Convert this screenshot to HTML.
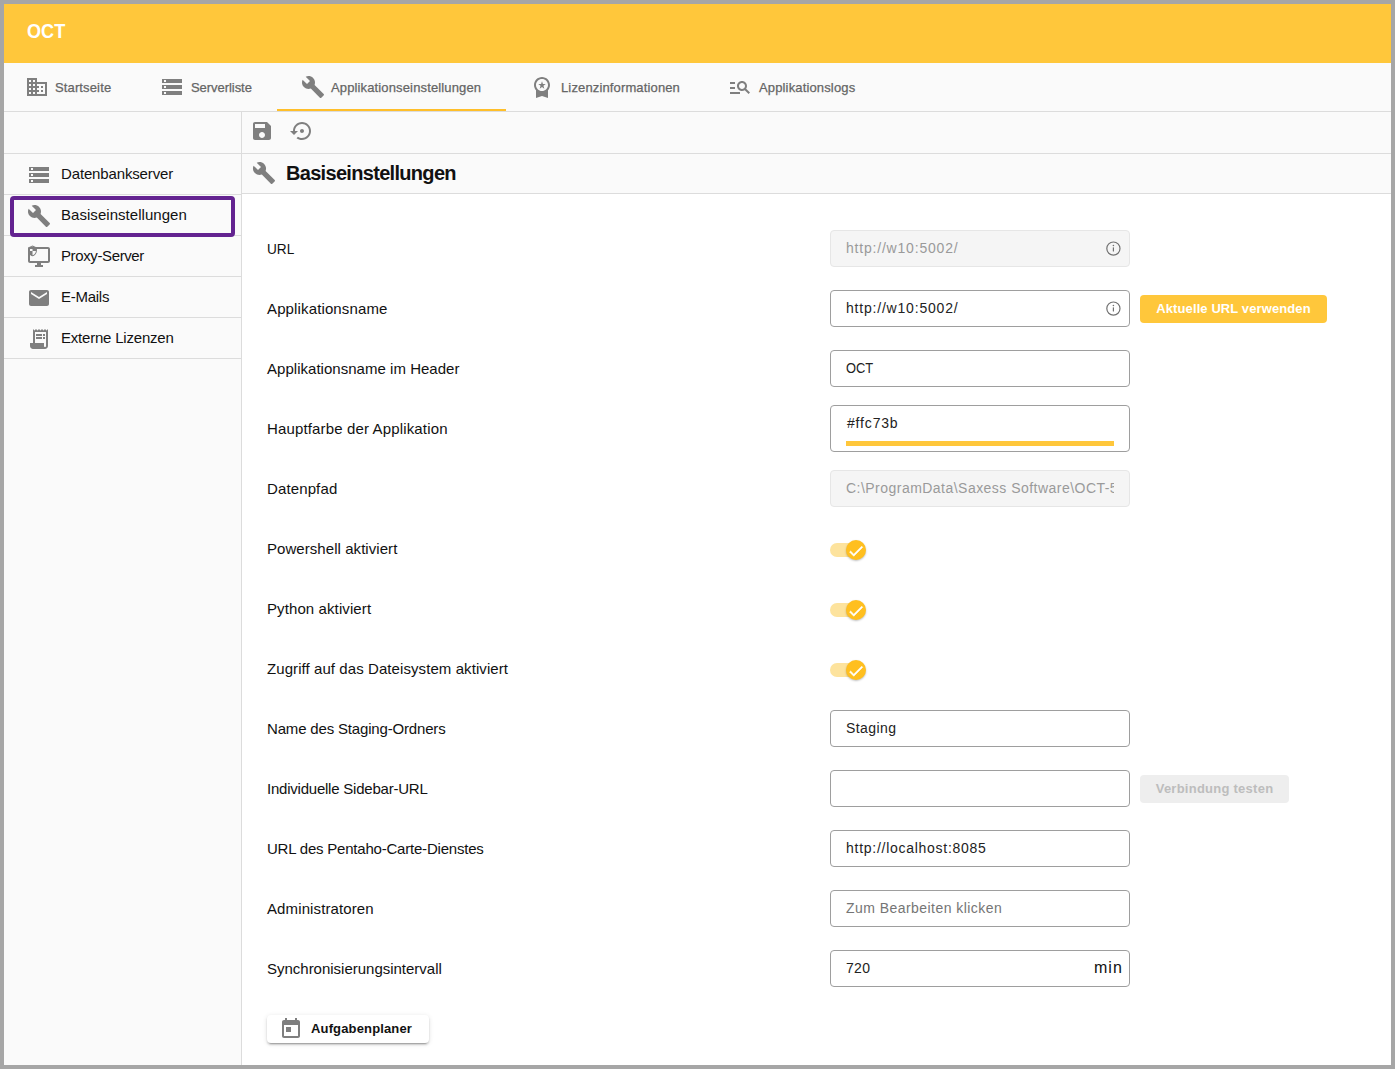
<!DOCTYPE html>
<html><head><meta charset="utf-8">
<style>
*{box-sizing:border-box;margin:0;padding:0}
html,body{width:1395px;height:1069px;overflow:hidden;background:#a6a6a6;font-family:"Liberation Sans",sans-serif}
.abs{position:absolute}
#frame{position:absolute;left:4px;top:4px;width:1387px;height:1061px;background:#fafafa;overflow:hidden}
#hdr{position:absolute;left:0;top:0;width:1387px;height:59px;background:#ffc73b}
#hdr span{position:absolute;left:23px;top:15px;color:#fff;font-weight:bold;font-size:20px;letter-spacing:0;line-height:24px;transform:scaleX(0.905);transform-origin:0 0}
#nav{position:absolute;left:0;top:59px;width:1387px;height:49px;background:#fafafa;border-bottom:1px solid #dcdcdc}
.tab{position:absolute;top:0;height:48px;color:#656565;font-size:13px;}
.tab svg{position:absolute;top:12px;left:0;width:24px;height:24px;fill:#7f7f7f}
.tab span{position:absolute;top:17px;white-space:nowrap;line-height:15px;letter-spacing:0.3px;-webkit-text-stroke:0.25px #656565}
#ink{position:absolute;left:273px;top:46px;width:229px;height:2px;background:#ffbf2a}
#side{position:absolute;left:0;top:108px;width:238px;height:953px;background:#fafafa;border-right:1px solid #dcdcdc}
.srow{position:absolute;left:0;width:237px;height:41px;border-bottom:1px solid #dcdcdc}
.srow svg{position:absolute;left:23px;top:9px;width:24px;height:24px;fill:#7f7f7f}
.srow span{position:absolute;left:57px;top:11px;font-size:15px;line-height:17px;color:#111;white-space:nowrap;letter-spacing:-0.1px}
#sel{position:absolute;left:6px;top:84px;width:225px;height:41px;border:4px solid #632390;border-radius:4px}
#tb{position:absolute;left:238px;top:108px;width:1149px;height:42px;background:#fafafa;border-bottom:1px solid #dcdcdc}
#tb svg{position:absolute;top:9px;width:24px;height:24px;fill:#7f7f7f}
#sh{position:absolute;left:238px;top:150px;width:1149px;height:40px;background:#fafafa;border-bottom:1px solid #dcdcdc}
#sh svg{position:absolute;left:10px;top:7px;width:24px;height:24px;fill:#7f7f7f}
#sh span{position:absolute;left:44px;top:8px;font-size:20px;font-weight:bold;line-height:22px;color:#111;letter-spacing:-0.69px}
#content{position:absolute;left:238px;top:190px;width:1149px;height:871px;background:#fff}
.lbl{position:absolute;left:25px;font-size:15px;line-height:17px;color:#111;white-space:nowrap}
.inp{position:absolute;left:588px;width:300px;height:37px;border:1px solid #9e9e9e;border-radius:4px;background:#fff;overflow:hidden}
.inp.dis{border-color:#e6e6e6;background:#f5f5f5}
.inp span{position:absolute;left:15px;top:9px;font-size:14px;line-height:16px;color:#222;white-space:nowrap;letter-spacing:0.1px}
.inp.dis span{color:#9a9a9a}
.info{position:absolute;right:7px;top:9px;width:18px;height:18px;fill:#707070}
.btn{position:absolute;height:28px;border-radius:4px;font-size:13px;font-weight:bold;line-height:28px;text-align:center;white-space:nowrap;letter-spacing:0.1px}
.tog{position:absolute;left:588px;width:36px;height:20px}
.tog .tr{position:absolute;left:0;top:3px;width:34px;height:14px;border-radius:7px;background:#fde39d}
.tog .th{position:absolute;left:16px;top:0;width:20px;height:20px;border-radius:50%;background:#ffbf1f;box-shadow:0 1px 2px rgba(0,0,0,.25)}
.tog svg{position:absolute;left:0.5px;top:1.5px;width:18px;height:18px;fill:#fff}
</style></head><body>
<div id="frame">
  <div id="hdr"><span>OCT</span></div>
  <div id="nav">
    <div class="tab" style="left:21px"><svg viewBox="0 0 24 24"><path d="M12 7V3H2v18h20V7H12zM6 19H4v-2h2v2zm0-4H4v-2h2v2zm0-4H4V9h2v2zm0-4H4V5h2v2zm4 12H8v-2h2v2zm0-4H8v-2h2v2zm0-4H8V9h2v2zm0-4H8V5h2v2zm10 12h-8v-2h2v-2h-2v-2h2v-2h-2V9h8v10zm-2-8h-2v2h2v-2zm0 4h-2v2h2v-2z"/></svg><span style="left:30px;letter-spacing:0.133px">Startseite</span></div>
    <div class="tab" style="left:156px"><svg viewBox="0 0 24 24"><path d="M2 20h20v-4H2v4zm2-3h2v2H4v-2zM2 4v4h20V4H2zm4 3H4V5h2v2zm-4 7h20v-4H2v4zm2-3h2v2H4v-2z"/></svg><span style="left:31px;letter-spacing:-0.050px">Serverliste</span></div>
    <div class="tab" style="left:297px"><svg viewBox="0 0 24 24"><path d="M22.7 19l-9.1-9.1c.9-2.3.4-5-1.5-6.9-2-2-5-2.4-7.4-1.3L9 6 6 9 1.6 4.7C.4 7.1.9 10.1 2.9 12.1c1.9 1.9 4.6 2.4 6.9 1.5l9.1 9.1c.4.4 1 .4 1.4 0l2.3-2.3c.5-.4.5-1.1.1-1.4z"/></svg><span style="left:30px;letter-spacing:0.137px">Applikationseinstellungen</span></div>
    <div class="tab" style="left:526px"><svg viewBox="0 0 24 24"><path d="M9.68 13.69L12 11.93l2.31 1.76-.88-2.85L15.75 9h-2.84L12 6.19 11.09 9H8.25l2.31 1.84-.88 2.85zM20 10c0-4.42-3.58-8-8-8s-8 3.58-8 8c0 2.03.76 3.87 2 5.28V23l6-2 6 2v-7.72c1.24-1.41 2-3.25 2-5.28zM12 4c3.31 0 6 2.69 6 6s-2.69 6-6 6-6-2.69-6-6 2.69-6 6-6z"/></svg><span style="left:31px;letter-spacing:0.139px">Lizenzinformationen</span></div>
    <div class="tab" style="left:724px"><svg viewBox="0 0 24 24"><path d="M7 9H2V7h5v2zm0 3H2v2h5v-2zm13.59 7l-3.83-3.83c-.8.52-1.74.83-2.76.83-2.76 0-5-2.240-5-5s2.24-5 5-5 5 2.24 5 5c0 1.02-.31 1.96-.83 2.75L22 17.59 20.590 19zM17 11c0-1.65-1.35-3-3-3s-3 1.35-3 3 1.35 3 3 3 3-1.35 3-3zM2 19h10v-2H2v2z"/></svg><span style="left:31px;letter-spacing:0.147px">Applikationslogs</span></div>
    <div id="ink"></div>
  </div>
  <div id="side">
    <div class="abs" style="left:0;top:41px;width:237px;height:1px;background:#dcdcdc"></div>
    <div class="srow" style="top:42px"><svg viewBox="0 0 24 24"><path d="M2 20h20v-4H2v4zm2-3h2v2H4v-2zM2 4v4h20V4H2zm4 3H4V5h2v2zm-4 7h20v-4H2v4zm2-3h2v2H4v-2z"/></svg><span style="letter-spacing:-0.143px">Datenbankserver</span></div>
    <div class="srow" style="top:83px"><svg viewBox="0 0 24 24"><path d="M22.7 19l-9.1-9.1c.9-2.3.4-5-1.5-6.9-2-2-5-2.4-7.4-1.3L9 6 6 9 1.6 4.7C.4 7.1.9 10.1 2.9 12.1c1.9 1.9 4.6 2.4 6.9 1.5l9.1 9.1c.4.4 1 .4 1.4 0l2.3-2.3c.5-.4.5-1.1.1-1.4z"/></svg><span style="letter-spacing:0.041px">Basiseinstellungen</span></div>
    <div class="srow" style="top:124px"><svg viewBox="0 0 24 24"><path d="M21 2H3c-1.1 0-2 .9-2 2v12c0 1.1.9 2 2 2h7v2H8v2h8v-2h-2v-2h7c1.1 0 2-.9 2-2V4c0-1.1-.9-2-2-2zm0 14H3V4h18v12z"/><path transform="translate(-0.35,0) scale(0.49)" d="M12 1L3 5v6c0 5.55 3.84 10.74 9 12 5.16-1.26 9-6.45 9-12V5l-9-4zm0 10.99h7c-.53 4.12-3.28 7.79-7 8.94V12H5V6.3l7-3.11v8.8z"/></svg><span style="letter-spacing:-0.382px">Proxy-Server</span></div>
    <div class="srow" style="top:165px"><svg viewBox="0 0 24 24"><path d="M20 4H4c-1.1 0-1.99.9-1.99 2L2 18c0 1.1.9 2 2 2h16c1.1 0 2-.9 2-2V6c0-1.1-.9-2-2-2zm0 4l-8 5-8-5V6l8 5 8-5v2z"/></svg><span style="letter-spacing:-0.267px">E-Mails</span></div>
    <div class="srow" style="top:206px"><svg viewBox="0 0 24 24"><path d="M19.5 3.5L18 2l-1.5 1.5L15 2l-1.5 1.5L12 2l-1.5 1.5L9 2 7.5 3.5 6 2v14H3v3c0 1.66 1.34 3 3 3h12c1.66 0 3-1.34 3-3V2l-1.5 1.5zM19 19c0 .55-.45 1-1 1s-1-.45-1-1v-3H8V5h11v14z"/><path d="M9 7h6v2H9zm7 0h2v2h-2zm-7 3h6v2H9zm7 0h2v2h-2z"/></svg><span style="letter-spacing:-0.207px">Externe Lizenzen</span></div>
    <div id="sel"></div>
  </div>
  <div id="tb">
    <svg style="left:8px;top:7px" viewBox="0 0 24 24"><path d="M17 3H5c-1.11 0-2 .9-2 2v14c0 1.1.89 2 2 2h14c1.1 0 2-.9 2-2V7l-4-4zm-5 16c-1.66 0-3-1.34-3-3s1.34-3 3-3 3 1.34 3 3-1.34 3-3 3zm3-10H5V5h10v4z"/></svg>
    <svg style="left:48px;top:7px" viewBox="0 0 24 24"><path d="M14 12c0-1.1-.9-2-2-2s-2 .9-2 2 .9 2 2 2 2-.9 2-2zm-2-9c-4.97 0-9 4.03-9 9H0l4 4 4-4H5c0-3.87 3.130-7 7-7s7 3.13 7 7-3.13 7-7 7c-1.51 0-2.91-.49-4.06-1.3l-1.42 1.44C8.04 20.3 9.94 21 12 21c4.97 0 9-4.03 9-9s-4.03-9-9-9z"/></svg>
  </div>
  <div id="sh"><svg viewBox="0 0 24 24"><path d="M22.7 19l-9.1-9.1c.9-2.3.4-5-1.5-6.9-2-2-5-2.4-7.4-1.3L9 6 6 9 1.6 4.7C.4 7.1.9 10.1 2.9 12.1c1.9 1.9 4.6 2.4 6.9 1.5l9.1 9.1c.4.4 1 .4 1.4 0l2.3-2.3c.5-.4.5-1.1.1-1.4z"/></svg><span>Basiseinstellungen</span></div>
  <div id="content">
    <div class="lbl" style="top:46px;transform:scaleX(0.91);transform-origin:0 0">URL</div>
    <div class="lbl" style="top:106px;letter-spacing:0.133px">Applikationsname</div>
    <div class="lbl" style="top:166px;letter-spacing:0.028px">Applikationsname im Header</div>
    <div class="lbl" style="top:226px;letter-spacing:0.148px">Hauptfarbe der Applikation</div>
    <div class="lbl" style="top:286px;letter-spacing:0.125px">Datenpfad</div>
    <div class="lbl" style="top:346px;letter-spacing:0.058px">Powershell aktiviert</div>
    <div class="lbl" style="top:406px;letter-spacing:0.100px">Python aktiviert</div>
    <div class="lbl" style="top:466px;letter-spacing:0.078px">Zugriff auf das Dateisystem aktiviert</div>
    <div class="lbl" style="top:526px;letter-spacing:-0.170px">Name des Staging-Ordners</div>
    <div class="lbl" style="top:586px;letter-spacing:-0.226px">Individuelle Sidebar-URL</div>
    <div class="lbl" style="top:646px;letter-spacing:-0.210px">URL des Pentaho-Carte-Dienstes</div>
    <div class="lbl" style="top:706px;letter-spacing:0.114px">Administratoren</div>
    <div class="lbl" style="top:766px;letter-spacing:-0.012px">Synchronisierungsintervall</div>
    <div class="inp dis" style="top:36px;"><span style="letter-spacing:0.8px">http://w10:5002/</span><svg class="info" viewBox="0 0 18 18"><circle cx="9.4" cy="8.6" r="6.6" fill="none" stroke="#727272" stroke-width="1.2"/><circle cx="9.4" cy="5.5" r=".8"/><rect x="8.8" y="7.2" width="1.2" height="4.4" rx=".6"/></svg></div>
    <div class="inp " style="top:96px;"><span style="letter-spacing:0.8px">http://w10:5002/</span><svg class="info" viewBox="0 0 18 18"><circle cx="9.4" cy="8.6" r="6.6" fill="none" stroke="#727272" stroke-width="1.2"/><circle cx="9.4" cy="5.5" r=".8"/><rect x="8.8" y="7.2" width="1.2" height="4.4" rx=".6"/></svg></div>
    <div class="btn" style="left:898px;top:101px;width:187px;background:#ffc73b;color:#fff">Aktuelle URL verwenden</div>
    <div class="inp " style="top:156px;"><span style="letter-spacing:-0.1px;transform:scaleX(0.92);transform-origin:0 0">OCT</span></div>
    <div class="inp" style="top:211px;height:47px"><span style="left:16px;letter-spacing:0.83px">#ffc73b</span><div class="abs" style="left:15px;top:35px;width:268px;height:5px;background:#ffc73b"></div></div>
    <div class="inp dis" style="top:276px;"><span style="letter-spacing:0.47px;width:268px;overflow:hidden">C:\ProgramData\Saxess Software\OCT-5002</span></div>
    <div class="tog" style="top:346px"><div class="tr"></div><div class="th"><svg viewBox="0 0 24 24"><path stroke="#fff" stroke-width="0.7" d="M9 16.17L4.83 12l-1.42 1.41L9 19 21 7l-1.41-1.41z"/></svg></div></div>
    <div class="tog" style="top:406px"><div class="tr"></div><div class="th"><svg viewBox="0 0 24 24"><path stroke="#fff" stroke-width="0.7" d="M9 16.17L4.83 12l-1.42 1.41L9 19 21 7l-1.41-1.41z"/></svg></div></div>
    <div class="tog" style="top:466px"><div class="tr"></div><div class="th"><svg viewBox="0 0 24 24"><path stroke="#fff" stroke-width="0.7" d="M9 16.17L4.83 12l-1.42 1.41L9 19 21 7l-1.41-1.41z"/></svg></div></div>
    <div class="inp " style="top:516px;"><span style="letter-spacing:0.42px">Staging</span></div>
    <div class="inp " style="top:576px;"><span></span></div>
    <div class="btn" style="left:898px;top:581px;width:149px;background:#eeeeee;color:#bdbdbd;letter-spacing:0.25px">Verbindung testen</div>
    <div class="inp " style="top:636px;"><span style="letter-spacing:0.73px">http://localhost:8085</span></div>
    <div class="inp" style="top:696px"><span style="color:#757575;letter-spacing:0.45px">Zum Bearbeiten klicken</span></div>
    <div class="inp" style="top:756px"><span style="letter-spacing:0.3px">720</span><span style="left:auto;right:6px;top:8px;color:#111;font-size:16px;line-height:18px;letter-spacing:1.1px">min</span></div>
    <div class="btn" style="left:25px;top:821px;width:162px;background:#fff;color:#111;box-shadow:0 3px 1px -2px rgba(0,0,0,.2),0 2px 2px 0 rgba(0,0,0,.14),0 1px 5px 0 rgba(0,0,0,.12);text-align:left"><svg class="abs" style="left:12px;top:2px;width:24px;height:24px;fill:#7f7f7f" viewBox="0 0 24 24"><path d="M19 3h-1V1h-2v2H8V1H6v2H5c-1.11 0-1.99.9-1.99 2L3 19c0 1.1.89 2 2 2h14c1.1 0 2-.9 2-2V5c0-1.1-.9-2-2-2zm0 16H5V8h14v11zM7 10h5v5H7z"/></svg><span class="abs" style="left:44px;top:0;letter-spacing:0.15px">Aufgabenplaner</span></div>
  </div>
</div>
</body></html>
